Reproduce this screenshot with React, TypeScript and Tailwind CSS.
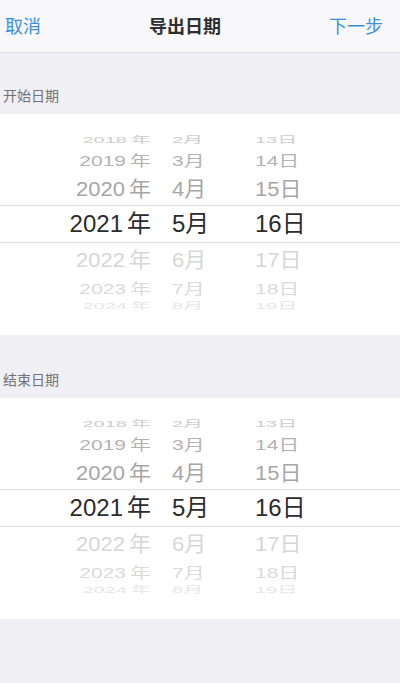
import React from 'react';

type Row = {
  y: string;
  m: string;
  d: string;
  box: string;
  text: string;
};

// wheel rows, top to bottom; outer rows are squashed like a rolling drum
const rows: Row[] = [
  { y: '2018', m: '2月', d: '13日', box: 'h-[16px]', text: 'text-[20px] text-[#cdcdcd] scale-y-[0.45]' },
  { y: '2019', m: '3月', d: '14日', box: 'h-[24px]', text: 'text-[21px] text-[#b3b3b3] scale-y-[0.72]' },
  { y: '2020', m: '4月', d: '15日', box: 'h-[33px]', text: 'text-[22px] text-[#a6a6a6] scale-y-[0.95]' },
  { y: '2021', m: '5月', d: '16日', box: 'h-[38px] border-y border-[#dedede]', text: 'text-[24px] text-[#2c2c2c]' },
  { y: '2022', m: '6月', d: '17日', box: 'h-[34px]', text: 'text-[22px] text-[#d6d6d6] scale-y-[0.95]' },
  { y: '2023', m: '7月', d: '18日', box: 'h-[22px]', text: 'text-[21px] text-[#dadada] scale-y-[0.72]' },
  { y: '2024', m: '8月', d: '19日', box: 'h-[14px]', text: 'text-[20px] text-[#e6e6e6] scale-y-[0.45]' },
];

const DateWheel: React.FC = () => (
  <div className="flex h-[221px] flex-col bg-white pt-[18px]">
    {rows.map((r) => (
      <div key={r.y} className={`flex items-center ${r.box}`}>
        <div className={`flex w-full items-center leading-none ${r.text}`}>
          <span className="w-[151px] text-right">
            {r.y}
            <span className="ml-[4px]">年</span>
          </span>
          <span className="w-[104px] pl-[21px]">{r.m}</span>
          <span>{r.d}</span>
        </div>
      </div>
    ))}
  </div>
);

const SectionLabel: React.FC<{ title: string; h: string }> = ({ title, h }) => (
  <div className={`flex items-end bg-[#efeff4] px-[3px] pb-[7px] ${h}`}>
    <span className="text-[14px] text-[#737373]">{title}</span>
  </div>
);

const App: React.FC = () => {
  return (
    <div className="flex h-[683px] w-[400px] flex-col bg-[#efeff4] font-['Liberation_Sans','Noto_Sans_CJK_SC',sans-serif]">
      <header className="flex h-[53px] items-center justify-between border-b border-[#dcdce0] bg-[#f8f8fa] pl-[5px] pr-[17px] pt-[3px]">
        <span className="text-[18px] text-[#3b8fdc]">取消</span>
        <span className="text-[18px] font-bold text-[#2e2e2e]">导出日期</span>
        <span className="text-[18px] text-[#3b8fdc]">下一步</span>
      </header>

      <SectionLabel title="开始日期" h="h-[61px]" />
      <DateWheel />

      <SectionLabel title="结束日期" h="h-[63px]" />
      <DateWheel />
    </div>
  );
};

export default App;
